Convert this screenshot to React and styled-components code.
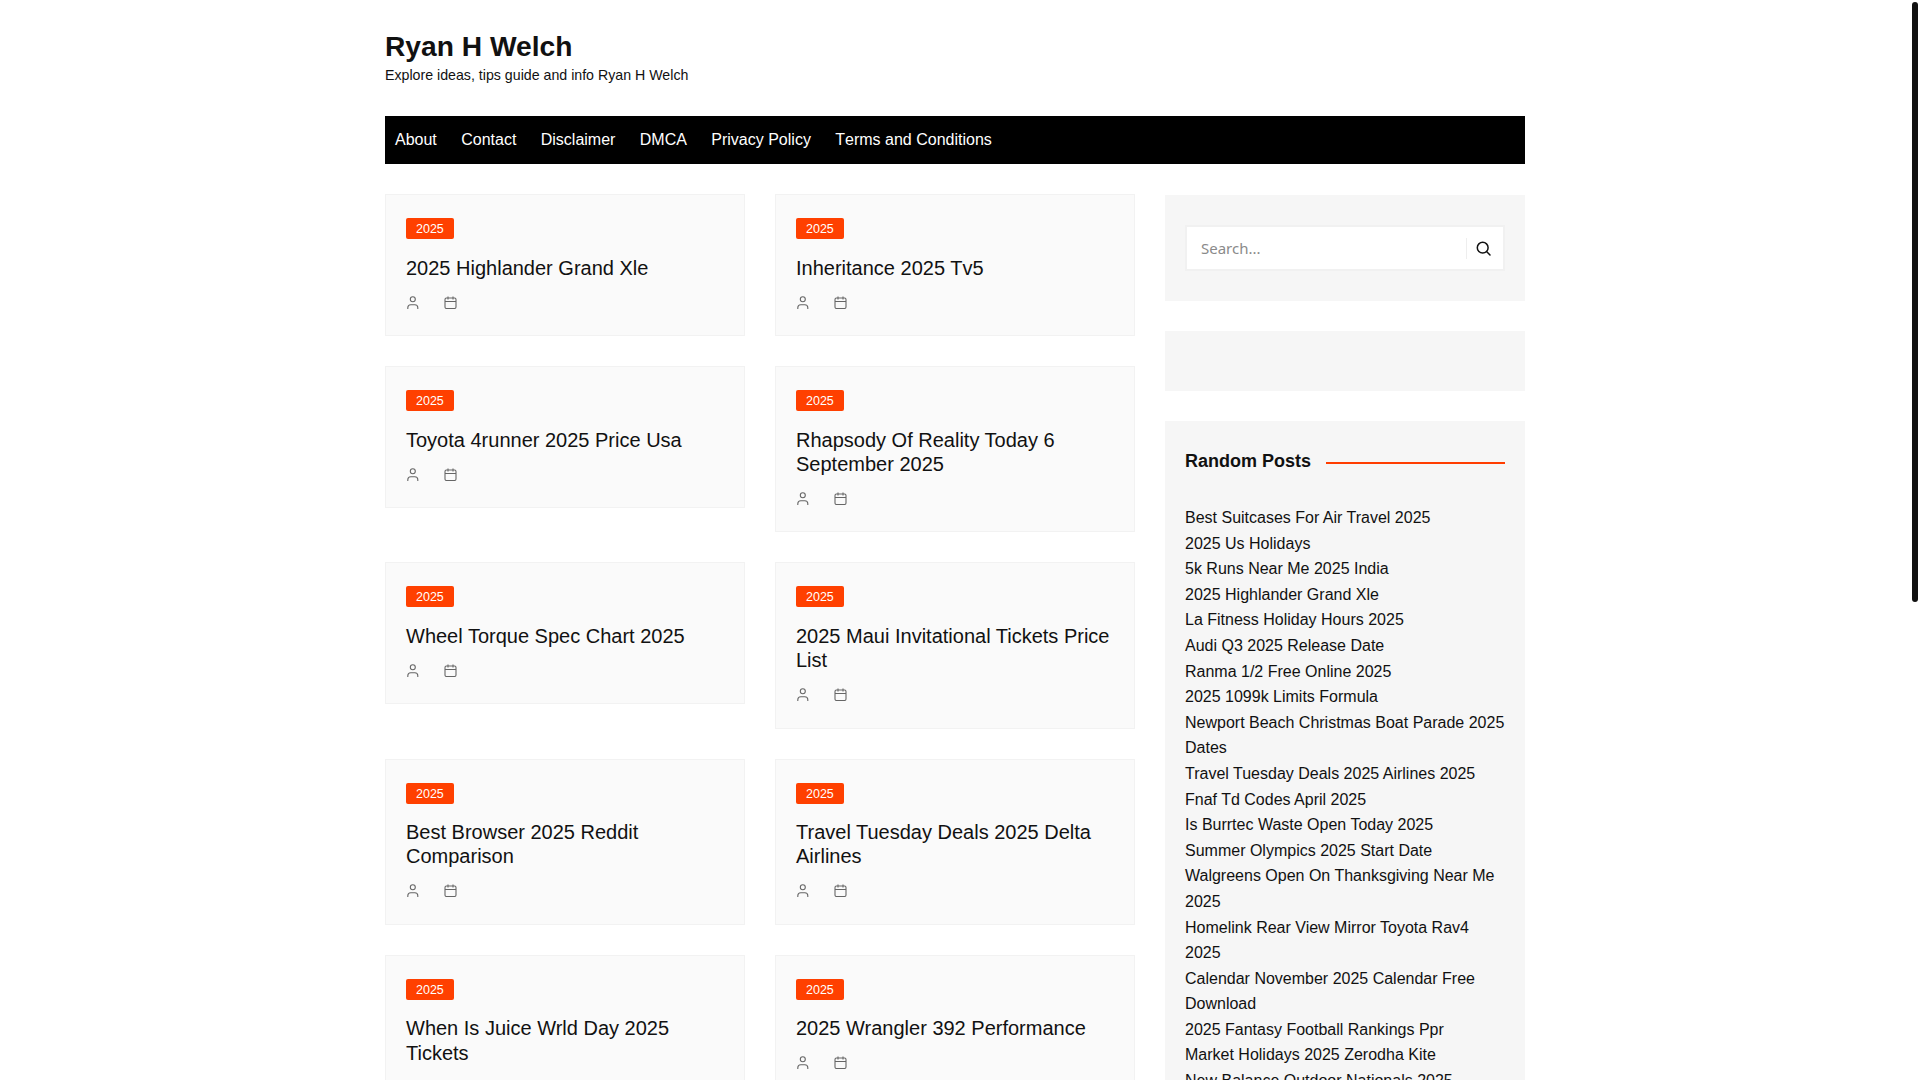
import React from "react";
import styled, { createGlobalStyle } from "styled-components";

const Global = createGlobalStyle`
  * { box-sizing: border-box; }
  html { background: #fff; }
  body { margin: 0; background: #fff; color: #111; font-family: "Liberation Sans", Arial, sans-serif; font-size: 16px; }
`;

const Shell = styled.div`
  padding-right: 10px;
`;
const ScrollThumb = styled.div`
  position: fixed;
  top: 2px;
  right: 2px;
  width: 6px;
  height: 600px;
  background: #111;
  border-radius: 3px;
`;
const Page = styled.div`
  width: 1140px;
  min-height: 1931px;
  margin: 0 auto;
`;
const Header = styled.header`
  padding: 30px 0 30px;
`;
const SiteTitle = styled.h1`
  margin: 0;
  font-size: 28.2px;
  line-height: 32px;
  font-weight: 700;
  color: #111;
`;
const Tagline = styled.p`
  margin: 2px 0 0;
  font-size: 14.2px;
  line-height: 22px;
  color: #111;
`;
const Nav = styled.nav`
  display: flex;
  height: 48px;
  align-items: center;
  padding: 0 10px;
  gap: 24.4px;
  background: #000;
`;
const NavLink = styled.a`
  color: #fff;
  font-size: 16px;
  line-height: 48px;
  font-kerning: none;
`;
const Content = styled.div`
  display: grid;
  grid-template-columns: 750px 360px;
  gap: 30px;
  margin-top: 30px;
  align-items: start;
`;
const PostGrid = styled.main`
  display: grid;
  grid-template-columns: 360px 360px;
  column-gap: 30px;
  row-gap: 30px;
  align-items: start;
`;
const Card = styled.article`
  background: #fafafa;
  border: 1px solid #f2f2f2;
  padding: 23px 20px 26.45px;
`;
const Badge = styled.span`
  display: block;
  width: fit-content;
  height: 21px;
  padding: 0 10px;
  background: #ff4000;
  border-radius: 2px;
  color: #fff;
  font-size: 12.5px;
  line-height: 22px;
`;
const PostTitle = styled.h2`
  margin: 16.55px 0 0;
  font-size: 20px;
  line-height: 24.3px;
  font-weight: 400;
  color: #111;
`;
const Meta = styled.div`
  display: flex;
  gap: 25px;
  margin-top: 15.7px;
  height: 13px;
  color: #666;
`;
const MetaIcon = styled.svg`
  display: block;
  width: 13px;
  height: 13px;
  fill: none;
  stroke: currentColor;
  stroke-width: 1.1;
`;
const Sidebar = styled.aside`
  display: flex;
  flex-direction: column;
  gap: 30px;
  margin-top: 1px;
`;
const Widget = styled.section`
  background: #f6f6f6;
  padding: ${(p) => p.$pad || "30px 20px"};
  min-height: ${(p) => p.$min || "0"};
`;
const SearchBox = styled.form`
  display: flex;
  align-items: center;
  height: 46px;
  background: #fff;
  border: 2px solid #f1f1f1;
`;
const SearchInput = styled.input`
  flex: 1;
  min-width: 0;
  height: 100%;
  border: 0;
  outline: 0;
  padding: 0 14px;
  background: transparent;
  font-family: "Noto Sans", sans-serif;
  font-size: 15px;
  &::placeholder { color: #8a8a8a; opacity: 1; }
`;
const SearchButton = styled.button`
  display: flex;
  align-items: center;
  justify-content: center;
  width: 37px;
  height: 21px;
  padding: 0 4px 0 0;
  background: none;
  border: 0;
  border-left: 1px solid #eee;
  color: #111;
`;
const SearchGlyph = styled.svg`
  display: block;
  width: 15px;
  height: 15px;
  fill: none;
  stroke: currentColor;
  stroke-width: 1.5;
  stroke-linecap: round;
`;
const WidgetHead = styled.div`
  display: flex;
  align-items: center;
  gap: 15px;
  height: 24px;
`;
const WidgetTitle = styled.h3`
  margin: 0;
  font-size: 18px;
  line-height: 24px;
  font-weight: 700;
  white-space: nowrap;
  color: #111;
`;
const Rule = styled.span`
  flex: 1;
  height: 2px;
  margin-top: 4px;
  background: #ff3d00;
`;
const PostList = styled.ul`
  list-style: none;
  margin: 32px 0 0;
  padding: 0;
`;
const PostItem = styled.li`
  font-size: 16px;
  line-height: 25.6px;
  color: #111;
`;

const posts = [
  "2025 Highlander Grand Xle",
  "Inheritance 2025 Tv5",
  "Toyota 4runner 2025 Price Usa",
  "Rhapsody Of Reality Today 6 September 2025",
  "Wheel Torque Spec Chart 2025",
  "2025 Maui Invitational Tickets Price List",
  "Best Browser 2025 Reddit Comparison",
  "Travel Tuesday Deals 2025 Delta Airlines",
  "When Is Juice Wrld Day 2025 Tickets",
  "2025 Wrangler 392 Performance",
];
const random = [
  "Best Suitcases For Air Travel 2025",
  "2025 Us Holidays",
  "5k Runs Near Me 2025 India",
  "2025 Highlander Grand Xle",
  "La Fitness Holiday Hours 2025",
  "Audi Q3 2025 Release Date",
  "Ranma 1/2 Free Online 2025",
  "2025 1099k Limits Formula",
  "Newport Beach Christmas Boat Parade 2025 Dates",
  "Travel Tuesday Deals 2025 Airlines 2025",
  "Fnaf Td Codes April 2025",
  "Is Burrtec Waste Open Today 2025",
  "Summer Olympics 2025 Start Date",
  "Walgreens Open On Thanksgiving Near Me 2025",
  "Homelink Rear View Mirror Toyota Rav4 2025",
  "Calendar November 2025 Calendar Free Download",
  "2025 Fantasy Football Rankings Ppr",
  "Market Holidays 2025 Zerodha Kite",
  "New Balance Outdoor Nationals 2025",
];
const nav = ["About", "Contact", "Disclaimer", "DMCA", "Privacy Policy", "Terms and Conditions"];

const PersonIcon = () => (
  <MetaIcon viewBox="0 0 13 13">
    <circle cx="6.8" cy="3.2" r="2.5" />
    <path d="M1.8 13v-1.2a3 3 0 0 1 3-3h4a3 3 0 0 1 3 3V13" />
  </MetaIcon>
);
const CalendarIcon = () => (
  <MetaIcon viewBox="0 0 13 13">
    <rect x="1" y="2" width="11" height="10.5" rx="1.4" />
    <path d="M1 5.5h11M4 .5v3M9 .5v3" />
  </MetaIcon>
);

export default function App() {
  return (
    <Shell>
      <Global />
      <ScrollThumb />
      <Page>
        <Header>
          <SiteTitle>Ryan H Welch</SiteTitle>
          <Tagline>Explore ideas, tips guide and info Ryan H Welch</Tagline>
        </Header>
        <Nav>
          {nav.map((n) => (
            <NavLink key={n}>{n}</NavLink>
          ))}
        </Nav>
        <Content>
          <PostGrid>
            {posts.map((t) => (
              <Card key={t}>
                <Badge>2025</Badge>
                <PostTitle>{t}</PostTitle>
                <Meta>
                  <PersonIcon />
                  <CalendarIcon />
                </Meta>
              </Card>
            ))}
          </PostGrid>
          <Sidebar>
            <Widget>
              <SearchBox onSubmit={(e) => e.preventDefault()}>
                <SearchInput placeholder="Search..." />
                <SearchButton type="submit" aria-label="Search">
                  <SearchGlyph viewBox="0 0 15 15">
                    <circle cx="6.7" cy="6.7" r="5.4" />
                    <path d="M10.8 10.8l3.2 3.2" />
                  </SearchGlyph>
                </SearchButton>
              </SearchBox>
            </Widget>
            <Widget $min="60px" />
            <Widget $pad="28px 20px 20px">
              <WidgetHead>
                <WidgetTitle>Random Posts</WidgetTitle>
                <Rule />
              </WidgetHead>
              <PostList>
                {random.map((r) => (
                  <PostItem key={r}>{r}</PostItem>
                ))}
              </PostList>
            </Widget>
          </Sidebar>
        </Content>
      </Page>
    </Shell>
  );
}
